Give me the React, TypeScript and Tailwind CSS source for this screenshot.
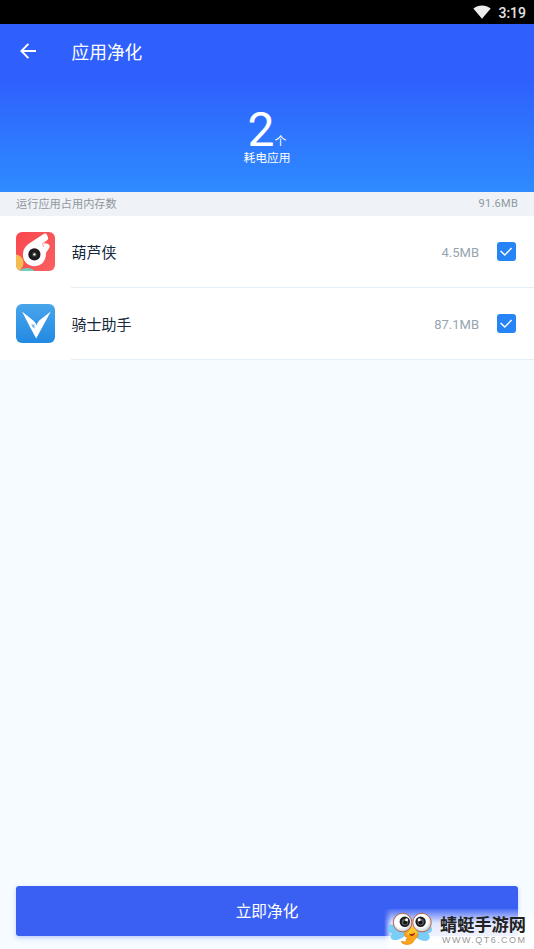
import { useState } from "react";

type AppRow = {
  id: string;
  name: string;
  size: string;
};

const APPS: AppRow[] = [
  { id: "huluxia", name: "葫芦侠", size: "4.5MB" },
  { id: "qishi", name: "骑士助手", size: "87.1MB" },
];

function HuluxiaIcon() {
  return (
    <svg viewBox="0 0 39 39" className="size-[39px] rounded-[6px]">
      <defs>
        <linearGradient id="hlx" x1="0" y1="0" x2="1" y2="1">
          <stop offset="0" stopColor="#f9484f" />
          <stop offset="1" stopColor="#f96060" />
        </linearGradient>
      </defs>
      <rect width="39" height="39" fill="url(#hlx)" />
      <circle cx="-1" cy="31" r="8.5" fill="#f5bd4f" />
      <ellipse cx="11" cy="41.5" rx="8.5" ry="5.5" fill="#6fd0bd" />
      <path
        d="M8.6 16.2C10 13.8 12.4 12 15 10.3L27.6 1.9C29 1 30.2 1.5 30.9 2.8L31.9 5C32.5 6.5 32 7.7 30.8 8.5L27.6 11.2L30.6 11.6C33.2 12 34.3 14 33.2 16L29.9 21C30.4 28.4 25.8 34.2 18.6 34.2C11.6 34.2 7 29 7 23.2C7 20.4 7.4 18.2 8.6 16.2Z"
        fill="#fff"
      />
      <path d="M30.6 9L26.6 11.4L27.6 15" fill="none" stroke="#f9888a" strokeWidth="0.8" />
      <circle cx="18.4" cy="22.4" r="6.1" fill="#1d1a20" />
      <circle cx="18.4" cy="22.4" r="2.6" fill="#343830" />
      <circle cx="18.4" cy="22.4" r="1.2" fill="#f4f4ee" />
    </svg>
  );
}

function QishiIcon() {
  return (
    <svg viewBox="0 0 39 39" className="size-[39px] rounded-[6px]">
      <defs>
        <linearGradient id="qs" x1="0" y1="0" x2="0" y2="1">
          <stop offset="0" stopColor="#48a5ec" />
          <stop offset="1" stopColor="#2389e2" />
        </linearGradient>
      </defs>
      <rect width="39" height="39" fill="url(#qs)" />
      <path
        d="M6 7.6L17.2 16.4C19 18 20.6 19.4 20 21.6L23.2 16.4L34.8 7.6L20.2 34.6L14 23Z"
        fill="#fff"
      />
      <path d="M15.4 20C16.6 21 18 20.8 18.8 20C18 21.8 18.2 23.2 19.2 24.6C17.2 23.8 15.8 22.4 15.4 20Z" fill="#6bb5ee" />
    </svg>
  );
}

function DragonflyLogo() {
  return (
    <svg viewBox="0 0 46 34" className="h-[34px] w-[46px] shrink-0">
      <defs>
        <radialGradient id="eye" cx="0.45" cy="0.4" r="0.6">
          <stop offset="0.6" stopColor="#fff" />
          <stop offset="1" stopColor="#c3cbd2" />
        </radialGradient>
      </defs>
      <path
        d="M13 17C7 10 0 12 1 17C1 20 3 21 5 21.5C2 25 4 29 10 28C14 27 18 24 20 22Z"
        fill="#79cdf7"
      />
      <path
        d="M33 17C39 12 45 13 45 17C45 20 43 21 41 21.5C44 24 43 29 38 29C33 29 28 25 26 22Z"
        fill="#79cdf7"
      />
      <path
        d="M24 14C28 17 31.5 20 31 23C30.5 26 28 26.8 27 28.5C26 31.5 22 33 19 32.4C16 31.8 13.8 30.6 14.5 29.2C16.5 30 19 30 20 28.5C17.5 28 20 26.8 20.5 25.7C17 24.7 16.4 22 18.6 20C21 18 21.5 16 24 14Z"
        fill="#fba516"
        stroke="#dd7a12"
        strokeWidth="0.6"
      />
      <circle cx="15.6" cy="10.6" r="9.3" fill="url(#eye)" stroke="#b76545" strokeWidth="1" />
      <circle cx="35" cy="10.6" r="9.3" fill="url(#eye)" stroke="#b76545" strokeWidth="1" />
      <path d="M25.4 14L19.6 22C24 24.5 28 23.5 31 21Z" fill="#ffc52b" />
      <path d="M22 21.5C24.5 22.5 26.5 22 28.2 20.6C27.7 24.5 23.5 25.5 22 21.5Z" fill="#a62a16" />
      <circle cx="17.8" cy="9.8" r="5.2" fill="#1b1d20" />
      <circle cx="33.6" cy="9.8" r="5.2" fill="#1b1d20" />
      <circle cx="18" cy="10" r="3.2" fill="#596066" />
      <circle cx="33.6" cy="10" r="3.2" fill="#596066" />
      <circle cx="18.2" cy="10.4" r="1.9" fill="#111" />
      <circle cx="33.5" cy="10.4" r="1.9" fill="#111" />
      <circle cx="19.6" cy="7.8" r="1.5" fill="#fff" />
      <circle cx="32.2" cy="7.8" r="1.5" fill="#fff" />
    </svg>
  );
}

function CheckBox({ checked, onToggle }: { checked: boolean; onToggle: () => void }) {
  return (
    <button
      type="button"
      role="checkbox"
      aria-checked={checked}
      onClick={onToggle}
      className={`flex size-[19px] items-center justify-center rounded-[3px] ${
        checked ? "bg-[#2784f5]" : "border border-slate-300 bg-white"
      }`}
    >
      {checked ? (
        <svg viewBox="0 0 19 19" className="size-[19px]" fill="none" stroke="#fff" strokeWidth="1.4">
          <path d="M3.6 8.9L7.8 13L14.6 6.1" />
        </svg>
      ) : null}
    </button>
  );
}

export default function App() {
  const [selected, setSelected] = useState<string[]>(APPS.map((a) => a.id));

  function toggle(id: string) {
    setSelected((prev) => (prev.includes(id) ? prev.filter((x) => x !== id) : [...prev, id]));
  }

  return (
    <div className="relative flex h-[949px] w-[534px] flex-col overflow-hidden bg-[#f5fbff] font-[Roboto,'Noto_Sans_CJK_SC',sans-serif]">
      <div className="flex h-6 shrink-0 items-center justify-end gap-[7px] bg-black pr-2">
        <svg viewBox="0 0 18 14" className="h-[14px] w-[18px]">
          <path d="M0.3 3.6C5.4 -0.5 12.6 -0.5 17.7 3.6L9 13.8Z" fill="#ececec" />
        </svg>
        <span className="pt-px text-[14px] leading-6 font-medium text-[#e4e4e4]">3:19</span>
      </div>

      <header className="h-[168px] shrink-0 bg-linear-to-b from-[#2f5ffd] from-33% to-[#2f8bff] text-white">
        <div className="flex h-14 items-center pl-5">
          <svg
            viewBox="0 0 16 16"
            className="mb-0.5 size-4"
            fill="none"
            stroke="#fff"
            strokeWidth="1.9"
          >
            <path d="M8.4 0.8L1.4 8L8.4 15.2M1.4 8H16" />
          </svg>
          <h1 className="ml-[35.5px] pt-0.5 text-[17.7px] leading-7">应用净化</h1>
        </div>
        <div className="flex flex-col items-center pt-[30px]">
          <div className="flex h-10 items-baseline">
            <span className="text-[48px] leading-10">{APPS.length}</span>
            <span className="text-[12px] leading-3">个</span>
          </div>
          <p className="text-[11.8px] leading-4">耗电应用</p>
        </div>
      </header>

      <div className="flex h-6 shrink-0 items-center justify-between bg-[#eff3f7] px-4 text-[#8f979f]">
        <span className="pt-0.5 text-[11.2px]">运行应用占用内存数</span>
        <span className="pt-px text-[11px] tracking-[0.25px]">91.6MB</span>
      </div>

      <ul className="shrink-0">
        {APPS.map((app) => (
          <li key={app.id} className="flex h-[72px] bg-white pl-4">
            <div className="pt-4">{app.id === "huluxia" ? <HuluxiaIcon /> : <QishiIcon />}</div>
            <div className="ml-4 flex flex-1 items-center border-b border-[#e6eef5] pr-[18px]">
              <span className="flex-1 pt-[3px] pl-[0.5px] text-[15px] text-[#15293d]">{app.name}</span>
              <span className="mr-[18px] pt-0.5 text-[13px] text-[#95a5b0]">{app.size}</span>
              <CheckBox checked={selected.includes(app.id)} onToggle={() => toggle(app.id)} />
            </div>
          </li>
        ))}
      </ul>

      <div className="mt-auto px-4 pb-[13px]">
        <button
          type="button"
          className="h-[50px] w-full rounded-[3px] bg-[#3a5ff3] pt-px text-[15.7px] text-white shadow-[0_2px_4px_rgba(58,95,243,0.3)]"
        >
          立即净化
        </button>
      </div>

      <div className="absolute right-0 bottom-0 flex h-10 w-[150px] items-start pl-[3px]">
        <div className="absolute inset-0 bg-linear-to-b from-white/10 via-white/85 via-35% to-white mask-l-from-95% mask-l-to-100%" />
        <div className="relative pt-[3px]">
          <DragonflyLogo />
        </div>
        <div className="relative ml-[7px] pt-[5px] whitespace-nowrap">
          <p className="text-[17.2px] leading-[22px] font-bold text-[#222]">蜻蜓手游网</p>
          <p className="ml-[2px] font-['Liberation_Sans',sans-serif] text-[9px] leading-[9px] tracking-[1.45px] text-[#999]">
            WWW.QT6.COM
          </p>
        </div>
      </div>
    </div>
  );
}
